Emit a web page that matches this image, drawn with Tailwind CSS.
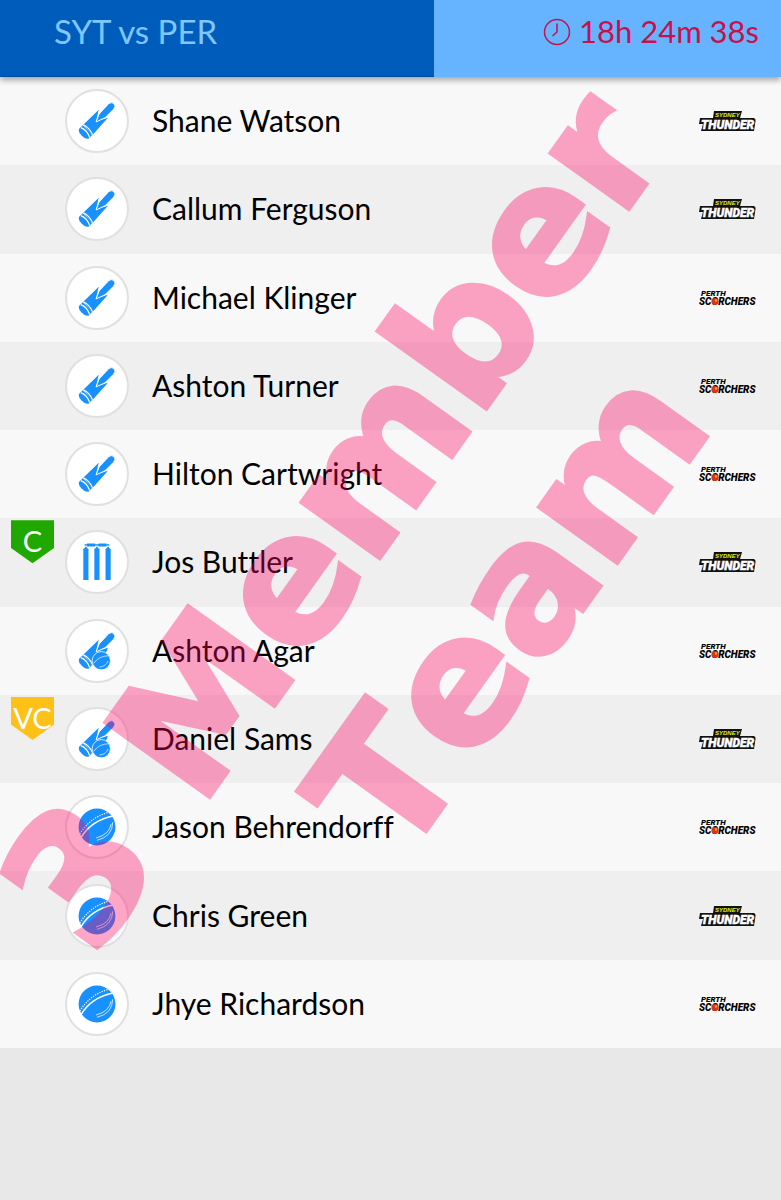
<!DOCTYPE html>
<html lang="en">
<head>
    <meta charset="UTF-8">
    <meta name="viewport" content="width=device-width, initial-scale=1.0">
    <script src="https://cdn.jsdelivr.net/npm/@tailwindcss/browser@4"></script>
    <title>SYT vs PER</title>
</head>
<body class="bg-[#e8e8e8] min-h-screen relative overflow-x-hidden font-['Lato',sans-serif] text-black [font-variant-ligatures:none]">

    <!-- Shared icons -->
    <svg class="hidden">
        <symbol id="bat" viewBox="0 0 40 40">
            <path fill="#1890ff" d="M5.500 24L21.800 8.200L19 20.500L31.500 16.500L15 35Z"/>
            <path fill="#1890ff" stroke="#fff" stroke-width="1" d="M19 21L22.300 12.500L32.500 1.500Q36 -0.500 38 2Q40.200 4.500 37.500 7.500L28.500 16.500Z"/>
            <path fill="#1890ff" d="M5 24.500L1.500 28Q-0.500 31 3.500 35Q8.500 40 11.500 38.300L15 34.500Z"/>
            <path fill="none" stroke="#fff" stroke-width="1.300" d="M3 27Q9.500 29.500 12.300 37.500M5.800 24Q12 27 15.300 34.500"/>
        </symbol>
        <symbol id="wicket" viewBox="0 0 40 40">
            <path fill="none" stroke="#1890ff" stroke-width="5.400" d="M8.300 39V6M19.900 39V6M31.700 39V6"/>
            <path fill="#1890ff" d="M5.600 7L8.300 3.500L11 7ZM17.200 7L19.900 3.500L22.600 7ZM29 7L31.700 3.500L34.400 7Z"/>
            <path fill="none" stroke="#1890ff" stroke-width="3.200" d="M9.500 2H18M21.500 2H30"/>
            <path fill="none" stroke="#1890ff" stroke-width="1.500" d="M7 2H33"/>
        </symbol>
        <symbol id="ball" viewBox="0 0 40 40">
            <circle cx="20" cy="20" r="19.400" fill="#1890ff"/>
            <path fill="none" stroke="#fff" stroke-width="1.600" d="M3 31.500Q14 13 37 8.500"/>
            <path fill="none" stroke="#fff" stroke-width="1.300" stroke-dasharray="1.300 1.300" d="M2 27.500Q12 10.500 32 4.500"/>
            <path fill="none" stroke="#fff" stroke-width="0.800" d="M36.500 15Q36.500 30 20 34M34.800 17Q33 28 19 31.500"/>
        </symbol>
        <symbol id="allround" viewBox="0 0 40 40">
            <use href="#bat" width="40" height="40"/>
            <path fill="#1890ff" d="M15 34L20.500 21.500L31.500 17L24 34Z"/>
            <circle cx="24.500" cy="30.200" r="9.600" fill="#1890ff" stroke="#fff" stroke-width="0.800"/>
            <path fill="none" stroke="#fff" stroke-width="0.700" d="M16.500 33Q22 25 32.500 25M31.500 30.500Q30 36 22.500 37"/>
        </symbol>
        <symbol id="thunder" viewBox="0 0 58 22">
            <path fill="#111" d="M16 1H44L42 8H56Q58 9 57.500 11L56 21H3L5 14H1L2 8H15Z"/>
            <text x="17" y="7" font-family="Liberation Sans" font-size="6" font-weight="700" font-style="italic" fill="#e8ee20">SYDNEY</text>
            <text x="3" y="19" font-family="Roboto" font-size="12" font-weight="900" font-style="italic" fill="#fff" stroke="#fff" stroke-width="0.400">THUNDER</text>
        </symbol>
        <symbol id="scorchers" viewBox="0 0 58 22">
            <text x="3" y="9" font-family="Roboto" font-size="8" font-weight="900" font-style="italic" fill="#000">PERTH</text>
            <text x="1" y="18" font-family="Roboto" font-size="10" font-weight="900" font-style="italic" fill="#000">SCORCHERS</text>
            <circle cx="17" cy="14.500" r="3.500" fill="#d8361a"/>
            <circle cx="18" cy="13.500" r="1.200" fill="#f8a048"/>
        </symbol>
    </svg>

    <!-- Header -->
    <header class="relative z-10 flex h-[77px] text-[31px] leading-[38px] shadow-[0_3px_6px_rgba(0,0,0,0.35)]">
        <div class="w-5/9 bg-[#005cbb] pl-[54px] pt-3 text-[33px] text-[#80c6ff] border-b border-[#004a9c]">SYT vs PER</div>
        <div class="flex-1 flex justify-end items-start gap-2 bg-[#66b3ff] pr-[22px] pt-3 text-[#c8104c]">
            <svg class="size-7 mt-[6px]" viewBox="0 0 28 28" fill="none" stroke="currentColor" stroke-width="1.500">
                <circle cx="14" cy="14" r="12.500"/>
                <path d="M14 5.500V14L9.500 18"/>
            </svg>
            <span>18h 24m 38s</span>
        </div>
    </header>

    <!-- Players -->
    <ul id="players" class="grid auto-rows-fr min-h-[971px]"></ul>

    <!-- Watermark -->
    <div class="absolute left-0 top-0 w-full h-[1200px] overflow-hidden pointer-events-none">
        <p class="absolute left-[-187px] top-[381px] w-[1200px] -rotate-[54.5deg] text-center whitespace-nowrap font-['DejaVu_Sans',sans-serif] font-bold text-[176px] leading-[196px] text-[#ff005e] opacity-35 [font-kerning:none] [-webkit-text-stroke:4px_#ff005e]">3 Member<span class="block pl-14">Team</span></p>
    </div>

    <script>
        const players = [
            { name: "Shane Watson", role: "bat", team: "thunder" },
            { name: "Callum Ferguson", role: "bat", team: "thunder" },
            { name: "Michael Klinger", role: "bat", team: "scorchers" },
            { name: "Ashton Turner", role: "bat", team: "scorchers" },
            { name: "Hilton Cartwright", role: "bat", team: "scorchers" },
            { name: "Jos Buttler", role: "wicket", team: "thunder", badge: "C" },
            { name: "Ashton Agar", role: "allround", team: "scorchers" },
            { name: "Daniel Sams", role: "allround", team: "thunder", badge: "VC" },
            { name: "Jason Behrendorff", role: "ball", team: "scorchers" },
            { name: "Chris Green", role: "ball", team: "thunder" },
            { name: "Jhye Richardson", role: "ball", team: "scorchers" }
        ];
        const badgeColors = { C: "bg-[#20a800]", VC: "bg-[#ffc018]" };

        document.getElementById("players").innerHTML = players.map((p) => `
            <li class="relative flex items-center pl-[65px] pr-[25px] bg-[#f8f8f8] even:bg-[#efefef]">
                ${p.badge ? `<span class="absolute left-[11px] top-[2px] w-[43px] h-[43px] flex justify-center text-white text-[29px] leading-[42px] [clip-path:polygon(0_0,100%_0,100%_64%,50%_100%,0_64%)] ${badgeColors[p.badge]}">${p.badge}</span>` : ""}
                <span class="size-16 shrink-0 flex items-center justify-center rounded-full bg-white border-2 border-[#e0e0e0]">
                    <svg class="size-[38px]"><use href="#${p.role}"/></svg>
                </span>
                <span class="flex-1 ml-[23px] pb-0.5 text-[30px] leading-9">${p.name}</span>
                <svg class="w-[58px] h-[22px]" role="img" aria-label="${p.team}"><use href="#${p.team}"/></svg>
            </li>`).join("");
    </script>
</body>
</html>
